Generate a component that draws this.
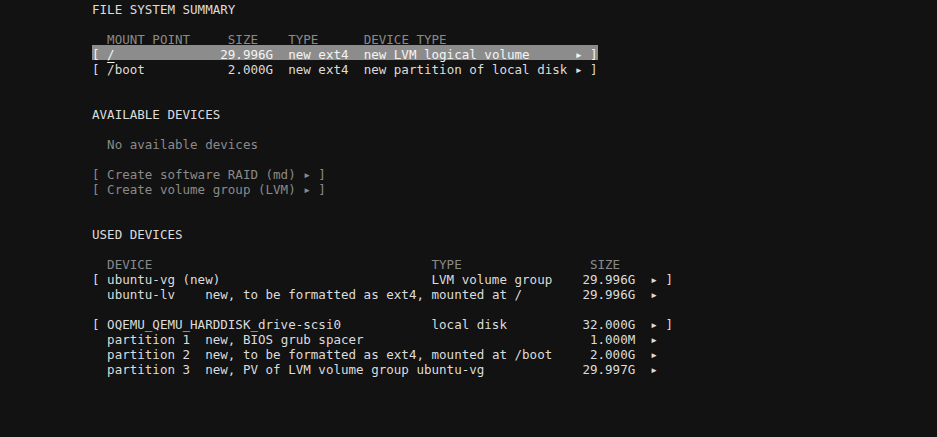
type Seg = [number, string, string?];

const gray = "text-[#8a8a8a]";

// one terminal line: each segment starts at a fixed character column
function Line({ segs, className = "" }: { segs?: Seg[]; className?: string }) {
  let col = 0;
  const out: React.ReactNode[] = [];
  (segs ?? []).forEach(([at, text, cls], i) => {
    if (at > col) out.push(" ".repeat(at - col));
    out.push(
      <span key={i} className={cls}>
        {text}
      </span>
    );
    col = Math.max(at, col) + text.length;
  });
  return <div className={`h-[15px] pt-[3px] leading-[13px] ${className}`}>{out.length ? out : " "}</div>;
}

const rows: (Seg[] | null | "hl")[] = [
  [[0, "FILE SYSTEM SUMMARY"]],
  null,
  [
    [2, "MOUNT POINT", gray],
    [18, "SIZE", gray],
    [26, "TYPE", gray],
    [36, "DEVICE TYPE", gray],
  ],
  "hl",
  [
    [0, "[ /boot"],
    [18, "2.000G"],
    [26, "new ext4"],
    [36, "new partition of local disk"],
    [64, "▸"],
    [66, "]"],
  ],
  null,
  null,
  [[0, "AVAILABLE DEVICES"]],
  null,
  [[2, "No available devices", gray]],
  null,
  [[0, "[ Create software RAID (md) ▸ ]", gray]],
  [[0, "[ Create volume group (LVM) ▸ ]", gray]],
  null,
  null,
  [[0, "USED DEVICES"]],
  null,
  [
    [2, "DEVICE", gray],
    [45, "TYPE", gray],
    [66, "SIZE", gray],
  ],
  [
    [0, "[ ubuntu-vg (new)"],
    [45, "LVM volume group"],
    [65, "29.996G"],
    [74, "▸"],
    [76, "]"],
  ],
  [
    [2, "ubuntu-lv"],
    [15, "new, to be formatted as ext4, mounted at /"],
    [65, "29.996G"],
    [74, "▸"],
  ],
  null,
  [
    [0, "[ OQEMU_QEMU_HARDDISK_drive-scsi0"],
    [45, "local disk"],
    [65, "32.000G"],
    [74, "▸"],
    [76, "]"],
  ],
  [
    [2, "partition 1"],
    [15, "new, BIOS grub spacer"],
    [66, "1.000M"],
    [74, "▸"],
  ],
  [
    [2, "partition 2"],
    [15, "new, to be formatted as ext4, mounted at /boot"],
    [66, "2.000G"],
    [74, "▸"],
  ],
  [
    [2, "partition 3"],
    [15, "new, PV of LVM volume group ubuntu-vg"],
    [65, "29.997G"],
    [74, "▸"],
  ],
];

const selected: Seg[] = [
  [0, "[ "],
  [2, "/", "underline underline-offset-[3px]"],
  [17, "29.996G"],
  [26, "new ext4"],
  [36, "new LVM logical volume"],
  [64, "▸"],
  [66, "]"],
];

export default function App() {
  return (
    <div className="w-[937px] h-[437px] overflow-hidden bg-[#121212] pl-[92px] text-[#dcdcdc] font-['DejaVu_Sans_Mono',monospace] text-[12.54px] whitespace-pre">
      {rows.map((r, i) =>
        r === "hl" ? (
          <Line key={i} segs={selected} className="w-[506px] bg-[#8c8c8c] text-[#f4f4f4]" />
        ) : (
          <Line key={i} segs={r ?? undefined} />
        )
      )}
    </div>
  );
}
